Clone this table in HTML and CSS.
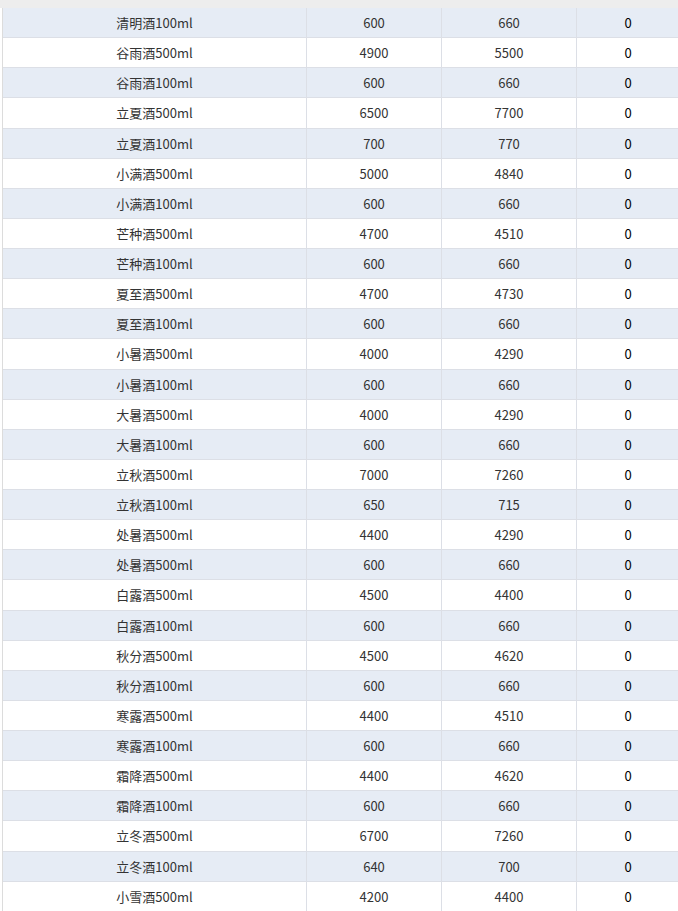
FILE: index.html
```html
<!DOCTYPE html>
<html lang="zh-CN">
<head>
<meta charset="utf-8">
<title>价格表</title>
<link rel="stylesheet" href="styles.css">
</head>
<body>
<div class="topbar"></div>
<div class="wrap">
  <div class="table">
    <div class="row alt"><div class="cell">清明酒100ml</div><div class="cell">600</div><div class="cell">660</div><div class="cell zero">0</div></div>
    <div class="row"><div class="cell">谷雨酒500ml</div><div class="cell">4900</div><div class="cell">5500</div><div class="cell zero">0</div></div>
    <div class="row alt"><div class="cell">谷雨酒100ml</div><div class="cell">600</div><div class="cell">660</div><div class="cell zero">0</div></div>
    <div class="row"><div class="cell">立夏酒500ml</div><div class="cell">6500</div><div class="cell">7700</div><div class="cell zero">0</div></div>
    <div class="row alt"><div class="cell">立夏酒100ml</div><div class="cell">700</div><div class="cell">770</div><div class="cell zero">0</div></div>
    <div class="row"><div class="cell">小满酒500ml</div><div class="cell">5000</div><div class="cell">4840</div><div class="cell zero">0</div></div>
    <div class="row alt"><div class="cell">小满酒100ml</div><div class="cell">600</div><div class="cell">660</div><div class="cell zero">0</div></div>
    <div class="row"><div class="cell">芒种酒500ml</div><div class="cell">4700</div><div class="cell">4510</div><div class="cell zero">0</div></div>
    <div class="row alt"><div class="cell">芒种酒100ml</div><div class="cell">600</div><div class="cell">660</div><div class="cell zero">0</div></div>
    <div class="row"><div class="cell">夏至酒500ml</div><div class="cell">4700</div><div class="cell">4730</div><div class="cell zero">0</div></div>
    <div class="row alt"><div class="cell">夏至酒100ml</div><div class="cell">600</div><div class="cell">660</div><div class="cell zero">0</div></div>
    <div class="row"><div class="cell">小暑酒500ml</div><div class="cell">4000</div><div class="cell">4290</div><div class="cell zero">0</div></div>
    <div class="row alt"><div class="cell">小暑酒100ml</div><div class="cell">600</div><div class="cell">660</div><div class="cell zero">0</div></div>
    <div class="row"><div class="cell">大暑酒500ml</div><div class="cell">4000</div><div class="cell">4290</div><div class="cell zero">0</div></div>
    <div class="row alt"><div class="cell">大暑酒100ml</div><div class="cell">600</div><div class="cell">660</div><div class="cell zero">0</div></div>
    <div class="row"><div class="cell">立秋酒500ml</div><div class="cell">7000</div><div class="cell">7260</div><div class="cell zero">0</div></div>
    <div class="row alt"><div class="cell">立秋酒100ml</div><div class="cell">650</div><div class="cell">715</div><div class="cell zero">0</div></div>
    <div class="row"><div class="cell">处暑酒500ml</div><div class="cell">4400</div><div class="cell">4290</div><div class="cell zero">0</div></div>
    <div class="row alt"><div class="cell">处暑酒500ml</div><div class="cell">600</div><div class="cell">660</div><div class="cell zero">0</div></div>
    <div class="row"><div class="cell">白露酒500ml</div><div class="cell">4500</div><div class="cell">4400</div><div class="cell zero">0</div></div>
    <div class="row alt"><div class="cell">白露酒100ml</div><div class="cell">600</div><div class="cell">660</div><div class="cell zero">0</div></div>
    <div class="row"><div class="cell">秋分酒500ml</div><div class="cell">4500</div><div class="cell">4620</div><div class="cell zero">0</div></div>
    <div class="row alt"><div class="cell">秋分酒100ml</div><div class="cell">600</div><div class="cell">660</div><div class="cell zero">0</div></div>
    <div class="row"><div class="cell">寒露酒500ml</div><div class="cell">4400</div><div class="cell">4510</div><div class="cell zero">0</div></div>
    <div class="row alt"><div class="cell">寒露酒100ml</div><div class="cell">600</div><div class="cell">660</div><div class="cell zero">0</div></div>
    <div class="row"><div class="cell">霜降酒500ml</div><div class="cell">4400</div><div class="cell">4620</div><div class="cell zero">0</div></div>
    <div class="row alt"><div class="cell">霜降酒100ml</div><div class="cell">600</div><div class="cell">660</div><div class="cell zero">0</div></div>
    <div class="row"><div class="cell">立冬酒500ml</div><div class="cell">6700</div><div class="cell">7260</div><div class="cell zero">0</div></div>
    <div class="row alt"><div class="cell">立冬酒100ml</div><div class="cell">640</div><div class="cell">700</div><div class="cell zero">0</div></div>
    <div class="row"><div class="cell">小雪酒500ml</div><div class="cell">4200</div><div class="cell">4400</div><div class="cell zero">0</div></div>
  </div>
</div>
</body>
</html>
```
FILE: styles.css
```css
html, body {
  margin: 0;
  padding: 0;
  background: #ffffff;
  overflow: hidden;
}
body {
  font-family: "Noto Sans CJK SC", "Noto Sans", sans-serif;
  font-size: 13px;
  color: #333333;
}
.topbar {
  height: 8px;
  background: #ededed;
}
.wrap {
  padding-left: 2px;
}
.table {
  width: 676px;
  border-left: 1px solid #dcdcdc;
}
.row {
  display: grid;
  grid-template-columns: 304px 135px 135px 1fr;
  height: 30.13px;
  box-sizing: border-box;
  border-bottom: 1px solid #dcdfe6;
  background: #ffffff;
}
.row.alt {
  background: #e6ecf5;
}
.cell {
  display: flex;
  align-items: center;
  justify-content: center;
  border-right: 1px solid #dcdfe6;
  line-height: 1;
}
.cell.zero {
  border-right: none;
  color: #000000;
}
```
